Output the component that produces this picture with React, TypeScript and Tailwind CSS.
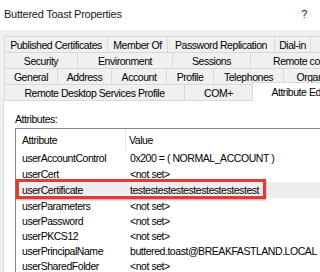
import React from 'react';

// --- Data ---
const ROW1 = [
    { label: 'Published Certificates', w: 'w-[104px]' },
    { label: 'Member Of', w: 'w-[60px]' },
    { label: 'Password Replication', w: 'w-[107px]' },
    { label: 'Dial-in', w: 'w-[36px]' },
    { label: 'Object', w: 'w-[60px]' },
];
const ROW2 = [
    { label: 'Security', w: 'w-[74px]' },
    { label: 'Environment', w: 'w-[95px]' },
    { label: 'Sessions', w: 'w-[78px]' },
    { label: 'Remote control', w: 'w-[110px]' },
];
const ROW3 = [
    { label: 'General', w: 'w-[54px]' },
    { label: 'Address', w: 'w-[54px]' },
    { label: 'Account', w: 'w-[55px]' },
    { label: 'Profile', w: 'w-[47px]' },
    { label: 'Telephones', w: 'w-[70px]' },
    { label: 'Organization', w: 'w-[80px]' },
];

const ATTRS: { name: string; value: string; h: string; selected?: boolean }[] = [
    { name: 'userAccountControl', value: '0x200 = ( NORMAL_ACCOUNT )', h: 'h-[16px]' },
    { name: 'userCert', value: '<not set>', h: 'h-[16px]' },
    { name: 'userCertificate', value: 'testestestestestestestestestest', h: 'h-[16px]', selected: true },
    { name: 'userParameters', value: '<not set>', h: 'h-[15px]' },
    { name: 'userPassword', value: '<not set>', h: 'h-[15px]' },
    { name: 'userPKCS12', value: '<not set>', h: 'h-[15px]' },
    { name: 'userPrincipalName', value: 'buttered.toast@BREAKFASTLAND.LOCAL', h: 'h-[15px]' },
    { name: 'userSharedFolder', value: '<not set>', h: 'h-[15px]' },
];

const font = "font-['Liberation_Sans',Arial,sans-serif] text-[10.5px] tracking-[-0.45px] leading-[12px]";

function Tab({ label, w, first }: { label: string; w: string; first?: boolean }) {
    return (
        <div
            className={`${w} ${first ? 'border-l' : ''} h-[16px] shrink-0 flex items-center justify-center whitespace-nowrap overflow-hidden border-t border-r border-[#d9d9d9] bg-[#f0f0f0] text-black`}
        >
            {label}
        </div>
    );
}

function TabRow({ tabs }: { tabs: { label: string; w: string }[] }) {
    return (
        <div className="flex ml-[4px]">
            {tabs.map((t, i) => (
                <Tab key={t.label} label={t.label} w={t.w} first={i === 0} />
            ))}
        </div>
    );
}

export default function App() {
    return (
        <div className={`w-[320px] h-[272px] overflow-hidden bg-[#f0f0f0] flex flex-col ${font}`}>
            {/* TITLE BAR */}
            <div className="h-[30px] bg-white flex items-start pt-[8px] pl-[4px] pr-[13px] justify-between shrink-0">
                <span className="text-[11px] tracking-[-0.25px] text-[#1a1a1a]">Buttered Toast Properties</span>
                <span className="text-[11px] text-[#1a1a1a]">?</span>
            </div>

            {/* TABS */}
            <div className="pt-[6px] shrink-0">
                <TabRow tabs={ROW1} />
                <TabRow tabs={ROW2} />
                <TabRow tabs={ROW3} />
                <div className="flex items-end ml-[4px] h-[16px]">
                    <Tab label="Remote Desktop Services Profile" w="w-[181px]" first />
                    <Tab label="COM+" w="w-[68px]" />
                    <div className="relative z-10 w-[100px] h-[19px] -mb-[1px] shrink-0 flex items-start justify-center pt-[3px] whitespace-nowrap bg-white border-t border-l border-[#d9d9d9] -ml-[1px]">
                        Attribute Editor
                    </div>
                </div>
            </div>

            {/* PANEL */}
            <div className="flex-1 ml-[3px] bg-white border-t border-l border-[#d9d9d9] pl-[11px] pt-[12px]">
                <div className="text-black">Attributes:</div>
                <div className="relative mt-[3px] w-[400px] border border-[#828790] bg-white text-black">
                    <div className="flex h-[21px] items-center">
                        <div className="w-[110px] h-full flex items-center pl-[6px] border-r border-[#e5e5e5]">Attribute</div>
                        <div className="pl-[3px]">Value</div>
                    </div>
                    {ATTRS.map(a => (
                        <div key={a.name} className={`flex items-center ${a.h} ${a.selected ? 'bg-[#eeeeee]' : ''}`}>
                            <div className="w-[110px] pl-[6px] whitespace-nowrap">{a.name}</div>
                            <div className="pl-[4px] whitespace-nowrap">{a.value}</div>
                        </div>
                    ))}

                    {/* annotation */}
                    <div className="absolute left-0 top-[50px] w-[250px] h-[20px] border-[3px] border-[#e53935] shadow-[0_1px_2px_rgba(0,0,0,0.35)]" />
                </div>
            </div>
        </div>
    );
}
